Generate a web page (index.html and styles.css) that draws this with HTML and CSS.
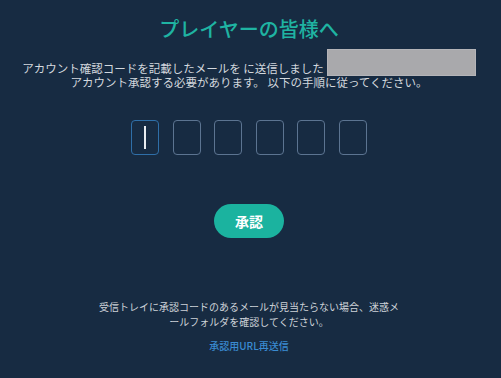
FILE: index.html
```html
<!DOCTYPE html>
<html lang="ja">
<head>
<meta charset="utf-8">
<link rel="stylesheet" href="styles.css">
</head>
<body>
<main class="page">
  <h1 class="title">プレイヤーの皆様へ</h1>
  <p class="intro">アカウント確認コードを記載したメールを に送信しました<span class="masked"></span><br>アカウント承認する必要があります。 以下の手順に従ってください。</p>
  <div class="code">
    <div class="digit active"><span class="caret"></span></div>
    <div class="digit"></div>
    <div class="digit"></div>
    <div class="digit"></div>
    <div class="digit"></div>
    <div class="digit"></div>
  </div>
  <button class="submit">承認</button>
  <p class="note">受信トレイに承認コードのあるメールが見当たらない場合、迷惑メールフォルダを確認してください。</p>
  <a class="resend" href="#">承認用URL再送信</a>
</main>
</body>
</html>
```
FILE: styles.css
```css
html, body {
  margin: 0;
  padding: 0;
  background: #172b42;
  height: 100%;
}
body {
  font-family: "Noto Sans CJK JP", "Noto Sans", sans-serif;
  color: #d3d8de;
}
.page {
  display: flex;
  flex-direction: column;
  align-items: center;
  padding-top: 17px;
  padding-right: 3px;
}
.title {
  margin: 0;
  font-size: 20px;
  line-height: 24px;
  font-weight: 500;
  color: #1fb4a2;
}
.intro {
  margin: 8px 0 0;
  font-size: 11.5px;
  line-height: 14px;
  text-align: center;
  color: #d3d8de;
}
.masked {
  display: inline-block;
  width: 149px;
  height: 27px;
  margin-left: 3px;
  margin-bottom: -3px;
  background: #a9a9ac;
  border: 1px solid #b4b4b8;
  box-sizing: border-box;
}
.code {
  display: flex;
  gap: 13.6px;
  margin-top: 31px;
}
.digit {
  width: 28px;
  height: 35px;
  box-sizing: border-box;
  border: 1.5px solid #5c7491;
  border-radius: 4px;
  display: flex;
  align-items: center;
  justify-content: center;
}
.digit.active {
  border-color: #2f6fa8;
}
.caret {
  width: 1.5px;
  height: 23px;
  background: #e8ecf0;
}
.submit {
  margin-top: 49px;
  width: 70px;
  height: 34px;
  border: none;
  border-radius: 17px;
  background: #1bb39f;
  color: #ffffff;
  font-family: inherit;
  font-size: 14px;
  font-weight: 700;
  padding: 0;
}
.note {
  margin: 61px 0 0;
  width: 304px;
  font-size: 10px;
  line-height: 15px;
  text-align: center;
  color: #cdd2d8;
}
.resend {
  margin-top: 10px;
  font-size: 10px;
  line-height: 14px;
  font-weight: 500;
  color: #3a8bd2;
  text-decoration: none;
}
```
